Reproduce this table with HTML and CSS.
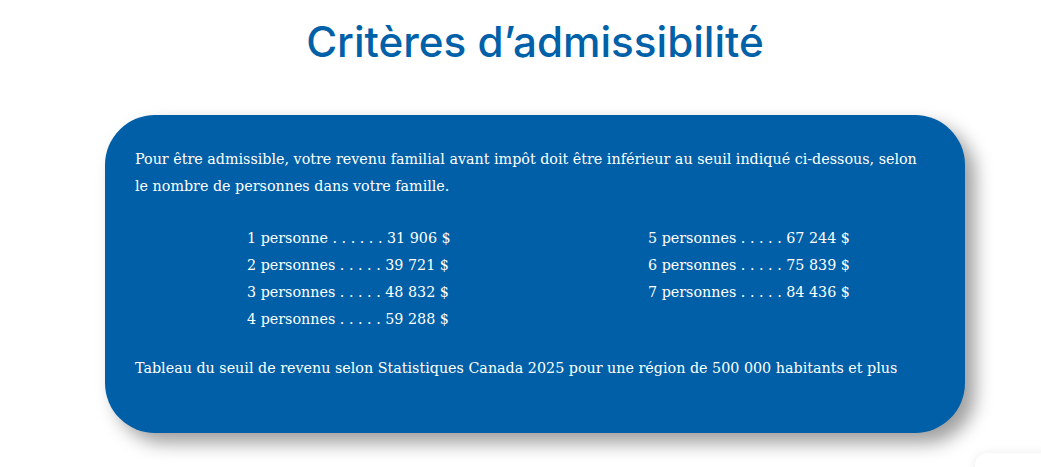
FILE: index.html
```html
<!DOCTYPE html>
<html lang="fr">
<head>
<meta charset="utf-8">
<title>Critères d’admissibilité</title>
<link rel="stylesheet" href="styles.css">
</head>
<body>
<main class="page">
  <h1 class="title">Critères d’admissibilité</h1>
  <section class="card">
    <p class="intro">Pour être admissible, votre revenu familial avant impôt doit être inférieur au seuil indiqué ci-dessous, selon le nombre de personnes dans votre famille.</p>
    <div class="lists">
      <ul class="list">
        <li>1 personne . . . . . . 31 906 $</li>
        <li>2 personnes . . . . . 39 721 $</li>
        <li>3 personnes . . . . . 48 832 $</li>
        <li>4 personnes . . . . . 59 288 $</li>
      </ul>
      <ul class="list">
        <li>5 personnes . . . . . 67 244 $</li>
        <li>6 personnes . . . . . 75 839 $</li>
        <li>7 personnes . . . . . 84 436 $</li>
      </ul>
    </div>
    <p class="note">Tableau du seuil de revenu selon Statistiques Canada 2025 pour une région de 500 000 habitants et plus</p>
  </section>
</main>
<div class="widget"></div>
</body>
</html>
```

FILE: styles.css
```css
html, body {
  margin: 0;
  padding: 0;
  background: #ffffff;
}
body {
  overflow: hidden;
  height: 467px;
}
.page {
  display: flex;
  flex-direction: column;
  align-items: center;
  padding-top: 16px;
  padding-left: 29px;
}
.title {
  margin: 0;
  font-family: Inter, "Open Sans", sans-serif;
  font-weight: 500;
  font-size: 42.2px;
  line-height: 52px;
  color: #0061a9;
  letter-spacing: 0;
}
.card {
  box-sizing: border-box;
  width: 860px;
  margin-top: 47px;
  padding: 31px 45px 51px 30px;
  background: #005fa7;
  border-radius: 50px;
  box-shadow: 10px 10px 18px rgba(0, 0, 0, 0.38);
  color: #ffffff;
  font-family: "DejaVu Serif", "Liberation Serif", serif;
  font-size: 14.3px;
  line-height: 27px;
}
.intro {
  margin: 0;
}
.lists {
  display: grid;
  grid-template-columns: 401px 1fr;
  padding-left: 112px;
  margin-top: 25px;
}
.list {
  list-style: none;
  margin: 0;
  padding: 0;
}
.note {
  margin: 22px 0 0 0;
}
.widget {
  position: fixed;
  left: 975px;
  top: 453px;
  width: 80px;
  height: 60px;
  background: #ffffff;
  border-radius: 12px;
  box-shadow: 0 0 10px rgba(0, 0, 0, 0.08);
}
```
